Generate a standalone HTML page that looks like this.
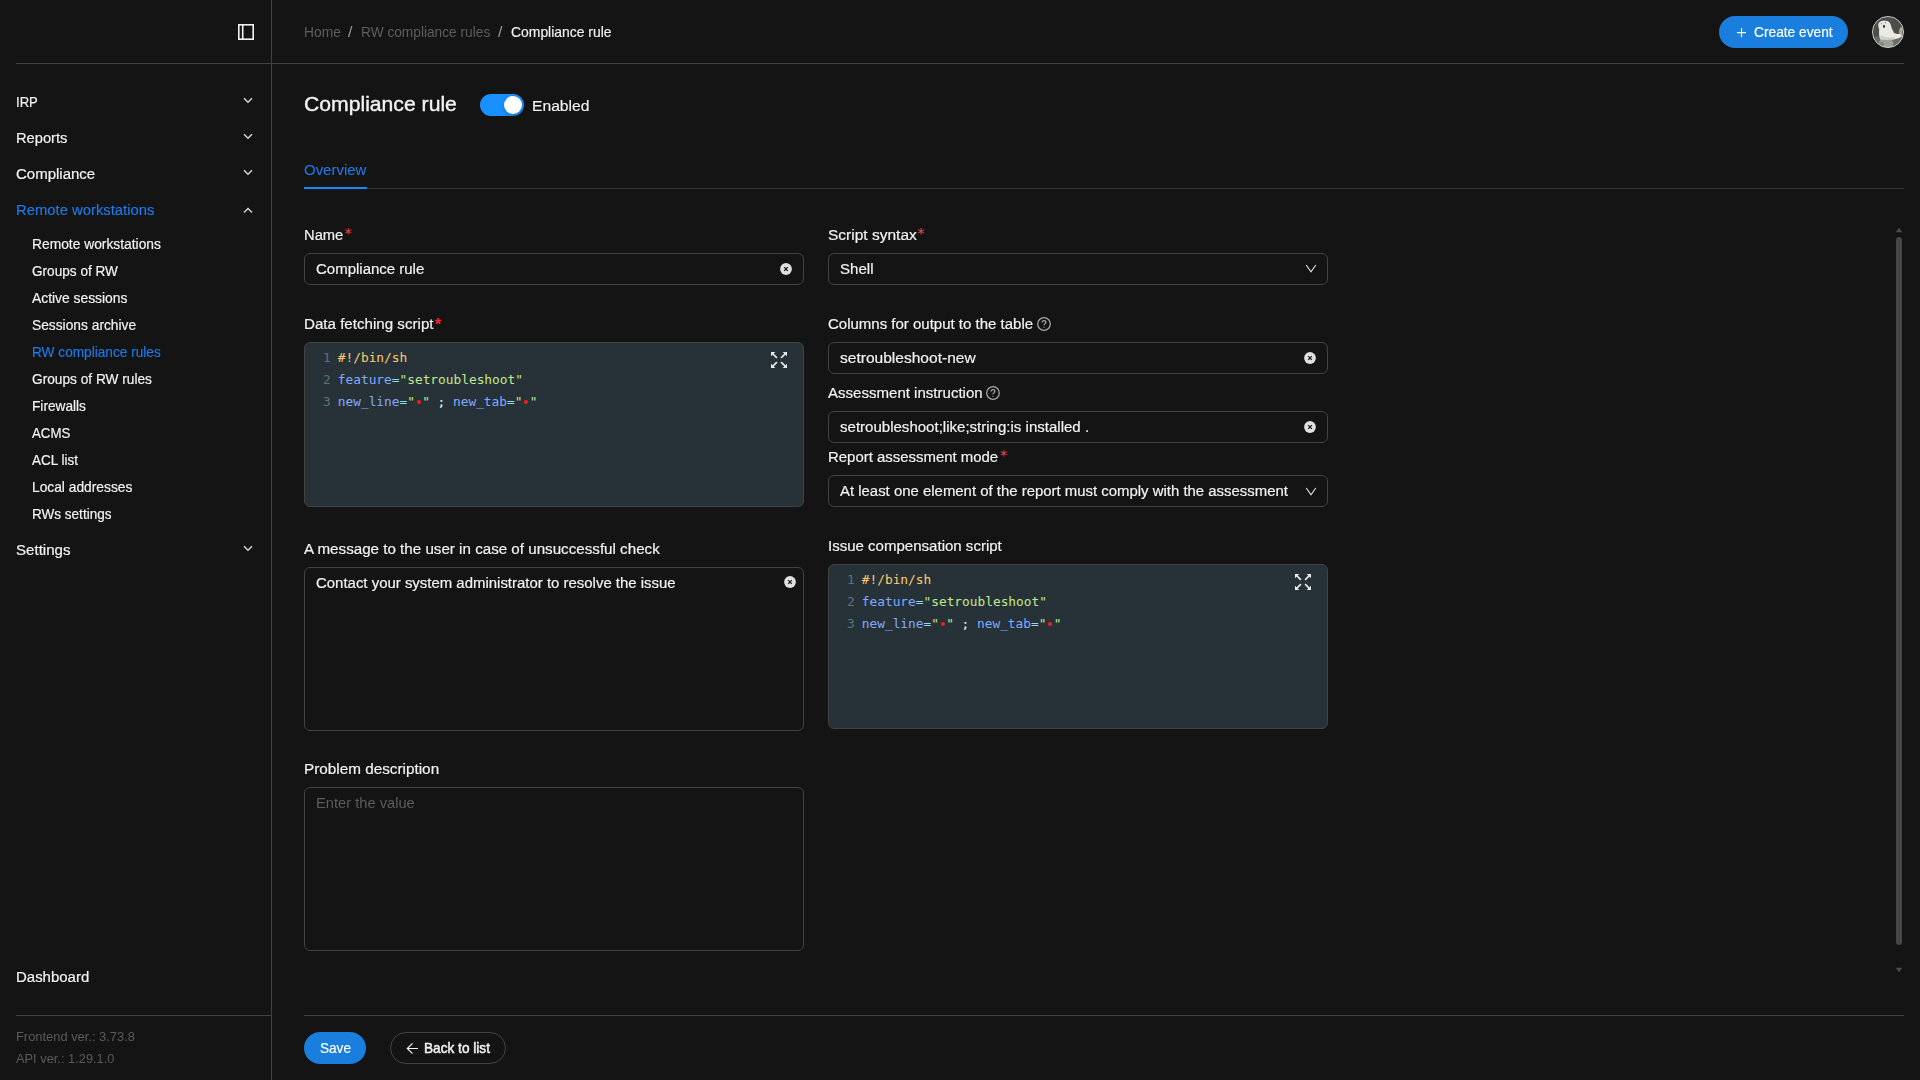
<!DOCTYPE html>
<html lang="en">
<head>
<meta charset="utf-8">
<title>Compliance rule</title>
<style>
*{box-sizing:border-box;margin:0;padding:0}
html,body{width:1920px;height:1080px;overflow:hidden;background:#141414;color:#f2f2f2;
  font-family:"Liberation Sans",sans-serif;font-size:14px;}
.abs{position:absolute;white-space:nowrap}
.t{position:absolute;white-space:nowrap;line-height:20px;height:20px}
.line{position:absolute;background:#414141}
.chev{position:absolute;left:243px;width:10px;height:7px}
.box{position:absolute;width:500px;border:1px solid #424242;border-radius:6px;background:#141414}
.code{position:absolute;width:500px;height:165px;border:1px solid #424242;border-radius:6px;background:#263238;
  font-family:"DejaVu Sans Mono","Liberation Mono",monospace;font-size:12.82px;color:#eeffff}
.code .ln{position:absolute;left:0;width:25.800px;text-align:right;color:#587480;line-height:22px;height:22px}
.code .cl{position:absolute;left:32.800px;line-height:22px;height:22px;white-space:pre}
.c-o{color:#ffcb6b}.c-b{color:#82aaff}.c-g{color:#c3e88d}.c-c{color:#89ddff}.c-w{color:#eeffff}
.dot{display:inline-block;width:4px;height:4px;border-radius:2px;background:#ff1a1a;vertical-align:middle;margin:0 1.600px;position:relative;top:-1px}
.ico{position:absolute}
.ast{position:absolute;font-family:"DejaVu Sans",sans-serif;font-size:14.5px;line-height:16px;color:#f0474f}
.astb{position:absolute;font-family:"Liberation Sans",sans-serif;font-weight:bold;font-size:16px;line-height:16px;color:#ff1f2d}
</style>
</head>
<body>
<!-- structural lines -->
<div class="line" style="left:271px;top:0;width:1px;height:1080px"></div>
<div class="line" style="left:16px;top:63px;width:1888px;height:1px"></div>
<div class="line" style="left:16px;top:1015px;width:255px;height:1px"></div>
<div class="line" style="left:304px;top:1015px;width:1600px;height:1px"></div>
<div class="line" style="left:304px;top:188px;width:1600px;height:1px;background:#303030"></div>

<!-- sidebar toggle -->
<svg class="ico" style="left:237px;top:23px" width="18" height="18" viewBox="0 0 18 18" fill="none" stroke="#f2f2f2" stroke-width="1.6"><rect x="1.8" y="1.8" width="14.4" height="14.4"/><line x1="5.7" y1="1.8" x2="5.7" y2="16.2"/></svg>

<!-- chevrons -->
<svg class="chev" style="top:97px" viewBox="0 0 10 7" fill="none" stroke="#d4d4d4" stroke-width="1.5"><path d="M1 1.300 L5 5.300 L9 1.300"/></svg>
<svg class="chev" style="top:133px" viewBox="0 0 10 7" fill="none" stroke="#d4d4d4" stroke-width="1.5"><path d="M1 1.300 L5 5.300 L9 1.300"/></svg>
<svg class="chev" style="top:169px" viewBox="0 0 10 7" fill="none" stroke="#d4d4d4" stroke-width="1.5"><path d="M1 1.300 L5 5.300 L9 1.300"/></svg>
<svg class="chev" style="top:207px" viewBox="0 0 10 7" fill="none" stroke="#d4d4d4" stroke-width="1.5"><path d="M1 5.500 L5 1.500 L9 5.500"/></svg>
<svg class="chev" style="top:545px" viewBox="0 0 10 7" fill="none" stroke="#d4d4d4" stroke-width="1.5"><path d="M1 1.300 L5 5.300 L9 1.300"/></svg>

<!-- create event button -->
<div class="abs" style="left:1719px;top:16px;width:129px;height:32px;border-radius:16px;background:#197ede"></div>
<svg class="ico" style="left:1736px;top:27px" width="11" height="11" viewBox="0 0 11 11" stroke="#fff" stroke-width="1.2"><path d="M5.500 1V10.200M0.900 5.600H10.100"/></svg>

<!-- avatar -->
<svg class="ico" style="left:1871px;top:15px" width="34" height="34" viewBox="-1 -1 34 34">
  <defs><clipPath id="av"><circle cx="16" cy="16" r="15.400"/></clipPath><filter id="bl" x="-20%" y="-20%" width="140%" height="140%"><feGaussianBlur stdDeviation="0.550"/></filter></defs>
  <g clip-path="url(#av)">
    <rect x="-1" y="-1" width="34" height="34" fill="#4a4f4b"/>
    <g filter="url(#bl)">
      <rect x="-1" y="20.500" width="34" height="13" fill="#666c66"/>
      <ellipse cx="14" cy="27.500" rx="7.500" ry="5" fill="#9da298"/>
      <ellipse cx="9" cy="29" rx="3" ry="3" fill="#7f857d"/>
      <path d="M6.300 9.500 C6 6.500 8.500 4.600 12 4.700 C15.500 4.300 18.300 5.800 18.800 9 C19.600 12 20.800 14.500 22 17 C24.500 17.800 27 18.300 29.500 17.500 L30 20.500 C27 22.300 24 23 21.500 23.600 L8.500 23.600 C7 21 6.800 17 7.200 13.500 C6.700 12.300 6.400 11 6.300 9.500Z" fill="#e9e8e3"/>
      <path d="M8.500 19 C12 21.500 18 22 23 21 L22 23.600 L8.500 23.600Z" fill="#cfcfc8"/>
      <path d="M27 17.500 C26.800 14 27.800 11.500 29.500 10.800 C30.800 12.500 31 16 30 19.500Z" fill="#b3a68b"/>
      <ellipse cx="12" cy="10.400" rx="1" ry="1.350" fill="#17181c"/>
      <circle cx="9.600" cy="7.700" r="0.550" fill="#3c4048"/>
      <circle cx="13.500" cy="6.800" r="0.550" fill="#3c4048"/>
    </g>
  </g>
  <circle cx="16" cy="16" r="15.550" fill="none" stroke="#d4d4d4" stroke-width="0.900"/>
</svg>

<!-- toggle -->
<div class="abs" style="left:480px;top:94px;width:44px;height:22px;border-radius:11px;background:#1890ff"></div>
<div class="abs" style="left:504px;top:96px;width:18px;height:18px;border-radius:9px;background:#fff;box-shadow:0 2px 4px rgba(0,35,11,0.2)"></div>

<!-- tab ink bar -->
<div class="abs" style="left:304px;top:187px;width:63px;height:2px;background:#1a89f7"></div>

<!-- asterisks -->
<div class="ast" style="left:344.5px;top:224.700px">*</div>
<div class="ast" style="left:917.300px;top:224.700px">*</div>
<div class="ast" style="left:1000px;top:447.100px">*</div>
<div class="astb" style="left:434.800px;top:317.200px">*</div>

<!-- help icons -->
<svg class="ico" style="left:1036px;top:316px" width="16" height="16" viewBox="0 0 16 16" fill="none" stroke="#a8a8a8" stroke-width="1.250"><circle cx="8" cy="8" r="6.300"/><path d="M6.100 6.500 C6.100 5.200 7 4.600 8 4.600 C9.100 4.600 9.900 5.300 9.900 6.300 C9.900 7.600 8 7.700 8 9.300" /><circle cx="8" cy="11.200" r="0.600" fill="#a8a8a8" stroke="none"/></svg>
<svg class="ico" style="left:985px;top:385px" width="16" height="16" viewBox="0 0 16 16" fill="none" stroke="#a8a8a8" stroke-width="1.250"><circle cx="8" cy="8" r="6.300"/><path d="M6.100 6.500 C6.100 5.200 7 4.600 8 4.600 C9.100 4.600 9.900 5.300 9.900 6.300 C9.900 7.600 8 7.700 8 9.300" /><circle cx="8" cy="11.200" r="0.600" fill="#a8a8a8" stroke="none"/></svg>

<!-- inputs -->
<div class="box" style="left:304px;top:253px;height:32px"></div>
<div class="box" style="left:828px;top:253px;height:32px"></div>
<div class="box" style="left:828px;top:342px;height:32px"></div>
<div class="box" style="left:828px;top:411px;height:32px"></div>
<div class="box" style="left:828px;top:475px;height:32px"></div>
<div class="box" style="left:304px;top:567px;height:164px"></div>
<div class="box" style="left:304px;top:787px;height:164px"></div>

<!-- clear icons -->
<svg class="ico" style="left:780px;top:263px" width="12" height="12" viewBox="0 0 12 12"><circle cx="6" cy="6" r="5.900" fill="#e0e0e0"/><path d="M4.200 4.200L7.800 7.800M7.800 4.200L4.200 7.800" stroke="#141414" stroke-width="1.200"/></svg>
<svg class="ico" style="left:1304px;top:352px" width="12" height="12" viewBox="0 0 12 12"><circle cx="6" cy="6" r="5.900" fill="#e0e0e0"/><path d="M4.200 4.200L7.800 7.800M7.800 4.200L4.200 7.800" stroke="#141414" stroke-width="1.200"/></svg>
<svg class="ico" style="left:1304px;top:421px" width="12" height="12" viewBox="0 0 12 12"><circle cx="6" cy="6" r="5.900" fill="#e0e0e0"/><path d="M4.200 4.200L7.800 7.800M7.800 4.200L4.200 7.800" stroke="#141414" stroke-width="1.200"/></svg>
<svg class="ico" style="left:784px;top:576px" width="12" height="12" viewBox="0 0 12 12"><circle cx="6" cy="6" r="5.900" fill="#e0e0e0"/><path d="M4.200 4.200L7.800 7.800M7.800 4.200L4.200 7.800" stroke="#141414" stroke-width="1.200"/></svg>

<!-- select arrows -->
<svg class="ico" style="left:1305px;top:264px" width="12" height="9" viewBox="0 0 12 9" fill="none" stroke="#e6e6e6" stroke-width="1.1"><path d="M1.200 1L6 7.800L10.800 1"/></svg>
<svg class="ico" style="left:1305px;top:487px" width="12" height="9" viewBox="0 0 12 9" fill="none" stroke="#e6e6e6" stroke-width="1.1"><path d="M1.200 1L6 7.800L10.800 1"/></svg>

<!-- code editors -->
<div class="code" style="left:304px;top:342px">
  <div class="ln" style="top:4px">1</div><div class="cl" style="top:4px"><span class="c-o">#!/bin/sh</span></div>
  <div class="ln" style="top:26px">2</div><div class="cl" style="top:26px"><span class="c-b">feature</span><span class="c-c">=</span><span class="c-g">"setroubleshoot"</span></div>
  <div class="ln" style="top:48px">3</div><div class="cl" style="top:48px"><span class="c-b">new_line</span><span class="c-c">=</span><span class="c-g">"</span><span class="dot"></span><span class="c-g">"</span><span class="c-w"> ; </span><span class="c-b">new_tab</span><span class="c-c">=</span><span class="c-g">"</span><span class="dot"></span><span class="c-g">"</span></div>
  <svg class="ico" style="left:466px;top:9px" width="16" height="16" viewBox="0 0 16 16" fill="#ececec"><path d="M0 0H4.300L0 4.300Z"/><path d="M16 0V4.300L11.700 0Z"/><path d="M0 16V11.700L4.300 16Z"/><path d="M16 16H11.700L16 11.700Z"/><path d="M1.500 1.500L5.900 5.900M14.500 1.500L10.100 5.900M1.500 14.500L5.900 10.100M14.500 14.500L10.100 10.100" stroke="#ececec" stroke-width="1.700" fill="none"/></svg>
</div>
<div class="code" style="left:828px;top:564px">
  <div class="ln" style="top:4px">1</div><div class="cl" style="top:4px"><span class="c-o">#!/bin/sh</span></div>
  <div class="ln" style="top:26px">2</div><div class="cl" style="top:26px"><span class="c-b">feature</span><span class="c-c">=</span><span class="c-g">"setroubleshoot"</span></div>
  <div class="ln" style="top:48px">3</div><div class="cl" style="top:48px"><span class="c-b">new_line</span><span class="c-c">=</span><span class="c-g">"</span><span class="dot"></span><span class="c-g">"</span><span class="c-w"> ; </span><span class="c-b">new_tab</span><span class="c-c">=</span><span class="c-g">"</span><span class="dot"></span><span class="c-g">"</span></div>
  <svg class="ico" style="left:466px;top:9px" width="16" height="16" viewBox="0 0 16 16" fill="#ececec"><path d="M0 0H4.300L0 4.300Z"/><path d="M16 0V4.300L11.700 0Z"/><path d="M0 16V11.700L4.300 16Z"/><path d="M16 16H11.700L16 11.700Z"/><path d="M1.500 1.500L5.900 5.900M14.500 1.500L10.100 5.900M1.500 14.500L5.900 10.100M14.500 14.500L10.100 10.100" stroke="#ececec" stroke-width="1.700" fill="none"/></svg>
</div>

<!-- scrollbar -->
<svg class="ico" style="left:1895px;top:227px" width="8" height="6" viewBox="0 0 8 6"><path d="M4 0.800L7.400 5.200H0.600Z" fill="#4a4a4a"/></svg>
<div class="abs" style="left:1896px;top:237px;width:6px;height:708px;border-radius:3px;background:#464646"></div>
<svg class="ico" style="left:1895px;top:967px" width="8" height="6" viewBox="0 0 8 6"><path d="M4 5.200L7.400 0.800H0.600Z" fill="#4a4a4a"/></svg>

<!-- footer buttons -->
<div class="abs" style="left:304px;top:1032px;width:62px;height:32px;border-radius:16px;background:#197ede"></div>
<div class="abs" style="left:390px;top:1032px;width:116px;height:32px;border-radius:16px;border:1px solid #424242"></div>
<svg class="ico" style="left:406px;top:1042px" width="13" height="13" viewBox="0 0 13 13" fill="none" stroke="#f2f2f2" stroke-width="1.2"><path d="M12 6.500H1.500M6.500 1.300L1.300 6.500L6.500 11.700"/></svg>

<!-- texts -->
<div class="t" style="left:16.08px;top:91.63px;font-size:15.5px;color:#f2f2f2;transform:scaleX(0.8465);transform-origin:0 0;-webkit-text-stroke:0.2px #f2f2f2;">IRP</div>
<div class="t" style="left:16.14px;top:127.63px;font-size:15.5px;color:#f2f2f2;transform:scaleX(0.9469);transform-origin:0 0;-webkit-text-stroke:0.2px #f2f2f2;">Reports</div>
<div class="t" style="left:15.62px;top:163.63px;font-size:15.5px;color:#f2f2f2;transform:scaleX(0.9673);transform-origin:0 0;-webkit-text-stroke:0.2px #f2f2f2;">Compliance</div>
<div class="t" style="left:16.13px;top:199.63px;font-size:15.5px;color:#1b7df0;transform:scaleX(0.9563);transform-origin:0 0;-webkit-text-stroke:0.1px #1b7df0;">Remote workstations</div>
<div class="t" style="left:15.67px;top:539.63px;font-size:15.5px;color:#f2f2f2;transform:scaleX(0.9726);transform-origin:0 0;-webkit-text-stroke:0.2px #f2f2f2;">Settings</div>
<div class="t" style="left:16.10px;top:966.63px;font-size:15.5px;color:#f2f2f2;transform:scaleX(0.9659);transform-origin:0 0;-webkit-text-stroke:0.2px #f2f2f2;">Dashboard</div>
<div class="t" style="left:32.21px;top:234.01px;font-size:14.4px;color:#f2f2f2;transform:scaleX(0.9593);transform-origin:0 0;-webkit-text-stroke:0.2px #f2f2f2;">Remote workstations</div>
<div class="t" style="left:31.63px;top:261.01px;font-size:14.4px;color:#f2f2f2;transform:scaleX(0.9454);transform-origin:0 0;-webkit-text-stroke:0.2px #f2f2f2;">Groups of RW</div>
<div class="t" style="left:32.35px;top:288.01px;font-size:14.4px;color:#f2f2f2;transform:scaleX(0.9625);transform-origin:0 0;-webkit-text-stroke:0.2px #f2f2f2;">Active sessions</div>
<div class="t" style="left:31.73px;top:315.01px;font-size:14.4px;color:#f2f2f2;transform:scaleX(0.9572);transform-origin:0 0;-webkit-text-stroke:0.2px #f2f2f2;">Sessions archive</div>
<div class="t" style="left:32.22px;top:342.01px;font-size:14.4px;color:#1b7df0;transform:scaleX(0.9491);transform-origin:0 0;-webkit-text-stroke:0.1px #1b7df0;">RW compliance rules</div>
<div class="t" style="left:31.62px;top:369.01px;font-size:14.4px;color:#f2f2f2;transform:scaleX(0.9508);transform-origin:0 0;-webkit-text-stroke:0.2px #f2f2f2;">Groups of RW rules</div>
<div class="t" style="left:32.18px;top:396.01px;font-size:14.4px;color:#f2f2f2;transform:scaleX(0.9498);transform-origin:0 0;-webkit-text-stroke:0.2px #f2f2f2;">Firewalls</div>
<div class="t" style="left:32.35px;top:423.01px;font-size:14.4px;color:#f2f2f2;transform:scaleX(0.9199);transform-origin:0 0;-webkit-text-stroke:0.2px #f2f2f2;">ACMS</div>
<div class="t" style="left:32.35px;top:450.01px;font-size:14.4px;color:#f2f2f2;transform:scaleX(0.9362);transform-origin:0 0;-webkit-text-stroke:0.2px #f2f2f2;">ACL list</div>
<div class="t" style="left:32.29px;top:477.01px;font-size:14.4px;color:#f2f2f2;transform:scaleX(0.9573);transform-origin:0 0;-webkit-text-stroke:0.2px #f2f2f2;">Local addresses</div>
<div class="t" style="left:32.23px;top:504.01px;font-size:14.4px;color:#f2f2f2;transform:scaleX(0.9404);transform-origin:0 0;-webkit-text-stroke:0.2px #f2f2f2;">RWs settings</div>
<div class="t" style="left:16.24px;top:1027.36px;font-size:13.4px;color:#5a5a5a;transform:scaleX(0.9627);transform-origin:0 0;">Frontend ver.: 3.73.8</div>
<div class="t" style="left:16.35px;top:1049.36px;font-size:13.4px;color:#5a5a5a;transform:scaleX(0.9584);transform-origin:0 0;">API ver.: 1.29.1.0</div>
<div class="t" style="left:304.05px;top:22.01px;font-size:14.4px;color:#5e5e5e;transform:scaleX(0.9587);transform-origin:0 0;">Home</div>
<div class="t" style="left:348.40px;top:22.01px;font-size:14.4px;color:#9a9a9a;transform:scaleX(1.1000);transform-origin:0 0;">/</div>
<div class="t" style="left:361.37px;top:22.01px;font-size:14.4px;color:#5e5e5e;transform:scaleX(0.9524);transform-origin:0 0;">RW compliance rules</div>
<div class="t" style="left:498.40px;top:22.01px;font-size:14.4px;color:#9a9a9a;transform:scaleX(1.1000);transform-origin:0 0;">/</div>
<div class="t" style="left:511.02px;top:22.01px;font-size:14.4px;color:#f2f2f2;transform:scaleX(0.9669);transform-origin:0 0;-webkit-text-stroke:0.15px #f2f2f2;">Compliance rule</div>
<div class="t" style="left:1753.68px;top:22.01px;font-size:14.4px;color:#ffffff;transform:scaleX(0.9550);transform-origin:0 0;-webkit-text-stroke:0.2px #ffffff;">Create event</div>
<div class="t" style="left:303.76px;top:93.83px;font-size:20.7px;color:#f2f2f2;transform:scaleX(1.0227);transform-origin:0 0;-webkit-text-stroke:0.4px #f2f2f2;">Compliance rule</div>
<div class="t" style="left:532.11px;top:95.63px;font-size:15.5px;color:#f2f2f2;transform:scaleX(1.0104);transform-origin:0 0;-webkit-text-stroke:0.15px #f2f2f2;">Enabled</div>
<div class="t" style="left:303.63px;top:159.63px;font-size:15.5px;color:#1b7df0;transform:scaleX(0.9653);transform-origin:0 0;">Overview</div>
<div class="t" style="left:304.18px;top:224.63px;font-size:15.5px;color:#f2f2f2;transform:scaleX(0.9504);transform-origin:0 0;-webkit-text-stroke:0.2px #f2f2f2;">Name</div>
<div class="t" style="left:827.65px;top:224.63px;font-size:15.5px;color:#f2f2f2;transform:scaleX(1.0004);transform-origin:0 0;-webkit-text-stroke:0.2px #f2f2f2;">Script syntax</div>
<div class="t" style="left:304.09px;top:313.63px;font-size:15.5px;color:#f2f2f2;transform:scaleX(0.9761);transform-origin:0 0;-webkit-text-stroke:0.2px #f2f2f2;">Data fetching script</div>
<div class="t" style="left:827.62px;top:313.63px;font-size:15.5px;color:#f2f2f2;transform:scaleX(0.9675);transform-origin:0 0;-webkit-text-stroke:0.2px #f2f2f2;">Columns for output to the table</div>
<div class="t" style="left:828.35px;top:382.63px;font-size:15.5px;color:#f2f2f2;transform:scaleX(0.9707);transform-origin:0 0;-webkit-text-stroke:0.2px #f2f2f2;">Assessment instruction</div>
<div class="t" style="left:828.12px;top:446.63px;font-size:15.5px;color:#f2f2f2;transform:scaleX(0.9636);transform-origin:0 0;-webkit-text-stroke:0.2px #f2f2f2;">Report assessment mode</div>
<div class="t" style="left:304.35px;top:538.63px;font-size:15.5px;color:#f2f2f2;transform:scaleX(0.9784);transform-origin:0 0;-webkit-text-stroke:0.2px #f2f2f2;">A message to the user in case of unsuccessful check</div>
<div class="t" style="left:827.90px;top:535.63px;font-size:15.5px;color:#f2f2f2;transform:scaleX(0.9698);transform-origin:0 0;-webkit-text-stroke:0.2px #f2f2f2;">Issue compensation script</div>
<div class="t" style="left:304.14px;top:758.63px;font-size:15.5px;color:#f2f2f2;transform:scaleX(0.9865);transform-origin:0 0;-webkit-text-stroke:0.2px #f2f2f2;">Problem description</div>
<div class="t" style="left:315.62px;top:258.63px;font-size:15.5px;color:#f2f2f2;transform:scaleX(0.9668);transform-origin:0 0;-webkit-text-stroke:0.2px #f2f2f2;">Compliance rule</div>
<div class="t" style="left:839.67px;top:258.63px;font-size:15.5px;color:#f2f2f2;transform:scaleX(0.9714);transform-origin:0 0;-webkit-text-stroke:0.2px #f2f2f2;">Shell</div>
<div class="t" style="left:839.85px;top:347.63px;font-size:15.5px;color:#f2f2f2;transform:scaleX(1.0027);transform-origin:0 0;-webkit-text-stroke:0.2px #f2f2f2;">setroubleshoot-new</div>
<div class="t" style="left:839.87px;top:416.63px;font-size:15.5px;color:#f2f2f2;transform:scaleX(0.9701);transform-origin:0 0;-webkit-text-stroke:0.2px #f2f2f2;">setroubleshoot;like;string:is installed .</div>
<div class="t" style="left:840.35px;top:480.63px;font-size:15.5px;color:#f2f2f2;transform:scaleX(0.9628);transform-origin:0 0;-webkit-text-stroke:0.2px #f2f2f2;">At least one element of the report must comply with the assessment</div>
<div class="t" style="left:315.62px;top:572.63px;font-size:15.5px;color:#f2f2f2;transform:scaleX(0.9642);transform-origin:0 0;-webkit-text-stroke:0.2px #f2f2f2;">Contact your system administrator to resolve the issue</div>
<div class="t" style="left:316.14px;top:792.63px;font-size:15.5px;color:#5c5c5c;transform:scaleX(0.9471);transform-origin:0 0;">Enter the value</div>
<div class="t" style="left:319.79px;top:1038.01px;font-size:14.4px;color:#ffffff;transform:scaleX(0.9434);transform-origin:0 0;-webkit-text-stroke:0.2px #ffffff;">Save</div>
<div class="t" style="left:424.30px;top:1038.01px;font-size:14.4px;color:#f2f2f2;transform:scaleX(0.9479);transform-origin:0 0;-webkit-text-stroke:0.5px #f2f2f2;">Back to list</div>
</body>
</html>
